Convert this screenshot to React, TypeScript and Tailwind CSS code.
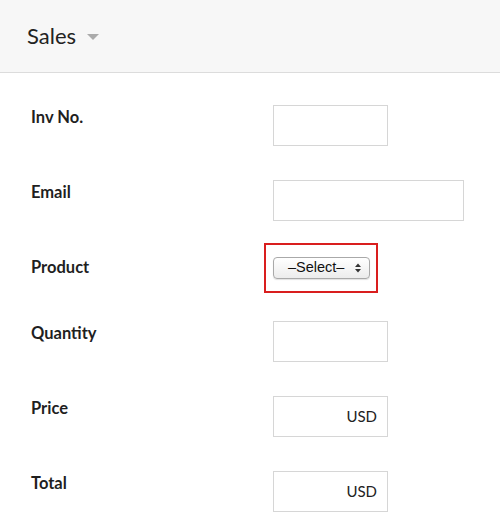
import type { ReactNode } from "react"

function Row({ label, height, children }: { label: string; height: string; children: ReactNode }) {
  return (
    <div className={`grid grid-cols-[242px_1fr] items-start ${height}`}>
      <div className="pt-[2px] text-[16.5px] leading-[20px] font-bold text-[#1f1f1f]">{label}</div>
      <div>{children}</div>
    </div>
  )
}

function TextBox({ width, suffix }: { width: string; suffix?: string }) {
  return (
    <div
      className={`${width} h-[41px] border border-[#d6d6d6] bg-white flex items-center justify-end pr-[10px] text-[15px] text-[#222]`}
    >
      {suffix}
    </div>
  )
}

export default function App() {
  return (
    <div className="w-[500px] h-[531px] overflow-hidden bg-white font-['Lato','Noto_Sans',sans-serif]">
      {/* header */}
      <div className="h-[73px] bg-[#f7f7f7] border-b border-[#dcdcdc] flex items-center pl-[27px]">
        <span className="text-[22px] leading-[28px] text-[#222]">Sales</span>
        <svg className="ml-[11px] mt-[1px]" width="12" height="6" viewBox="0 0 12 6">
          <path d="M0 0 L12 0 L6 6 Z" fill="#ababab" />
        </svg>
      </div>

      {/* form */}
      <div className="pt-[32px] pl-[31px]">
        <Row label="Inv No." height="h-[75px]">
          <TextBox width="w-[115px]" />
        </Row>
        <Row label="Email" height="h-[75px]">
          <TextBox width="w-[191px]" />
        </Row>
        <Row label="Product" height="h-[66px]">
          <div className="relative mt-[2px] w-[97px]">
            <div className="h-[22px] w-[97px] rounded-[4px] border border-[#a9a9a9] bg-gradient-to-b from-white to-[#ececec] shadow-[0_1px_1px_rgba(0,0,0,0.12)] flex items-center pl-[14px] pr-[8px] font-['Liberation_Sans',sans-serif] text-[14.5px] text-[#111]">
              <span className="flex-1">–Select–</span>
              <svg width="6" height="10" viewBox="0 0 6 10">
                <path d="M0 4 L3 0.5 L6 4 Z" fill="#333" />
                <path d="M0 6 L3 9.5 L6 6 Z" fill="#333" />
              </svg>
            </div>
            <div className="absolute left-[-9px] top-[-14px] w-[114px] h-[50px] border-2 border-[#d91e1e]" />
          </div>
        </Row>
        <Row label="Quantity" height="h-[75px]">
          <TextBox width="w-[115px]" />
        </Row>
        <Row label="Price" height="h-[75px]">
          <TextBox width="w-[115px]" suffix="USD" />
        </Row>
        <Row label="Total" height="h-[75px]">
          <TextBox width="w-[115px]" suffix="USD" />
        </Row>
      </div>
    </div>
  )
}
